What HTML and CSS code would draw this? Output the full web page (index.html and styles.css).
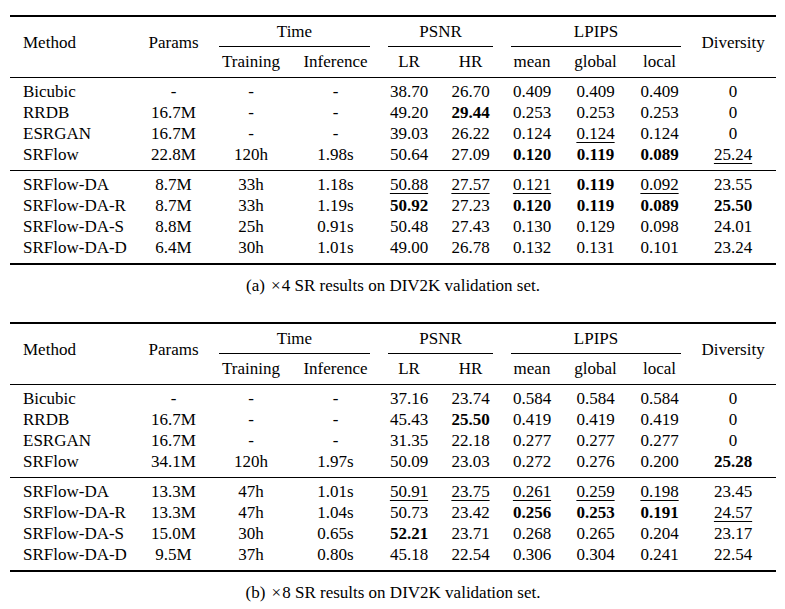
FILE: index.html
```html
<!DOCTYPE html>
<html>
<head>
<meta charset="utf-8">
<link rel="stylesheet" href="styles.css">
</head>
<body>
<div class="page">
  <table class="results">
    <colgroup>
      <col class="c-method"><col class="c-params"><col class="c-train"><col class="c-inf"><col class="c-lr"><col class="c-hr"><col class="c-mean"><col class="c-global"><col class="c-local"><col class="c-div">
    </colgroup>
    <thead>
      <tr class="h1">
        <th rowspan="2" class="span2 left">Method</th>
        <th rowspan="2" class="span2">Params</th>
        <th colspan="2" class="grp"><span>Time</span></th>
        <th colspan="2" class="grp"><span>PSNR</span></th>
        <th colspan="3" class="grp"><span>LPIPS</span></th>
        <th rowspan="2" class="span2">Diversity</th>
      </tr>
      <tr class="h2">
        <th>Training</th><th>Inference</th><th>LR</th><th>HR</th><th>mean</th><th>global</th><th>local</th>
      </tr>
    </thead>
    <tbody class="mid">
      <tr><td class="left">Bicubic</td><td>-</td><td>-</td><td>-</td><td>38.70</td><td>26.70</td><td>0.409</td><td>0.409</td><td>0.409</td><td>0</td></tr>
      <tr><td class="left">RRDB</td><td>16.7M</td><td>-</td><td>-</td><td>49.20</td><td><b>29.44</b></td><td>0.253</td><td>0.253</td><td>0.253</td><td>0</td></tr>
      <tr><td class="left">ESRGAN</td><td>16.7M</td><td>-</td><td>-</td><td>39.03</td><td>26.22</td><td>0.124</td><td><u>0.124</u></td><td>0.124</td><td>0</td></tr>
      <tr><td class="left">SRFlow</td><td>22.8M</td><td>120h</td><td>1.98s</td><td>50.64</td><td>27.09</td><td><b>0.120</b></td><td><b>0.119</b></td><td><b>0.089</b></td><td><u>25.24</u></td></tr>
    </tbody>
    <tbody class="end">
      <tr><td class="left">SRFlow-DA</td><td>8.7M</td><td>33h</td><td>1.18s</td><td><u>50.88</u></td><td><u>27.57</u></td><td><u>0.121</u></td><td><b>0.119</b></td><td><u>0.092</u></td><td>23.55</td></tr>
      <tr><td class="left">SRFlow-DA-R</td><td>8.7M</td><td>33h</td><td>1.19s</td><td><b>50.92</b></td><td>27.23</td><td><b>0.120</b></td><td><b>0.119</b></td><td><b>0.089</b></td><td><b>25.50</b></td></tr>
      <tr><td class="left">SRFlow-DA-S</td><td>8.8M</td><td>25h</td><td>0.91s</td><td>50.48</td><td>27.43</td><td>0.130</td><td>0.129</td><td>0.098</td><td>24.01</td></tr>
      <tr><td class="left">SRFlow-DA-D</td><td>6.4M</td><td>30h</td><td>1.01s</td><td>49.00</td><td>26.78</td><td>0.132</td><td>0.131</td><td>0.101</td><td>23.24</td></tr>
    </tbody>
  </table>
  <p class="caption">(a) <span class="times">&times;</span>4 SR results on DIV2K validation set.</p>

  <table class="results second">
    <colgroup>
      <col class="c-method"><col class="c-params"><col class="c-train"><col class="c-inf"><col class="c-lr"><col class="c-hr"><col class="c-mean"><col class="c-global"><col class="c-local"><col class="c-div">
    </colgroup>
    <thead>
      <tr class="h1">
        <th rowspan="2" class="span2 left">Method</th>
        <th rowspan="2" class="span2">Params</th>
        <th colspan="2" class="grp"><span>Time</span></th>
        <th colspan="2" class="grp"><span>PSNR</span></th>
        <th colspan="3" class="grp"><span>LPIPS</span></th>
        <th rowspan="2" class="span2">Diversity</th>
      </tr>
      <tr class="h2">
        <th>Training</th><th>Inference</th><th>LR</th><th>HR</th><th>mean</th><th>global</th><th>local</th>
      </tr>
    </thead>
    <tbody class="mid">
      <tr><td class="left">Bicubic</td><td>-</td><td>-</td><td>-</td><td>37.16</td><td>23.74</td><td>0.584</td><td>0.584</td><td>0.584</td><td>0</td></tr>
      <tr><td class="left">RRDB</td><td>16.7M</td><td>-</td><td>-</td><td>45.43</td><td><b>25.50</b></td><td>0.419</td><td>0.419</td><td>0.419</td><td>0</td></tr>
      <tr><td class="left">ESRGAN</td><td>16.7M</td><td>-</td><td>-</td><td>31.35</td><td>22.18</td><td>0.277</td><td>0.277</td><td>0.277</td><td>0</td></tr>
      <tr><td class="left">SRFlow</td><td>34.1M</td><td>120h</td><td>1.97s</td><td>50.09</td><td>23.03</td><td>0.272</td><td>0.276</td><td>0.200</td><td><b>25.28</b></td></tr>
    </tbody>
    <tbody class="end">
      <tr><td class="left">SRFlow-DA</td><td>13.3M</td><td>47h</td><td>1.01s</td><td><u>50.91</u></td><td><u>23.75</u></td><td><u>0.261</u></td><td><u>0.259</u></td><td><u>0.198</u></td><td>23.45</td></tr>
      <tr><td class="left">SRFlow-DA-R</td><td>13.3M</td><td>47h</td><td>1.04s</td><td>50.73</td><td>23.42</td><td><b>0.256</b></td><td><b>0.253</b></td><td><b>0.191</b></td><td><u>24.57</u></td></tr>
      <tr><td class="left">SRFlow-DA-S</td><td>15.0M</td><td>30h</td><td>0.65s</td><td><b>52.21</b></td><td>23.71</td><td>0.268</td><td>0.265</td><td>0.204</td><td>23.17</td></tr>
      <tr><td class="left">SRFlow-DA-D</td><td>9.5M</td><td>37h</td><td>0.80s</td><td>45.18</td><td>22.54</td><td>0.306</td><td>0.304</td><td>0.241</td><td>22.54</td></tr>
    </tbody>
  </table>
  <p class="caption">(b) <span class="times">&times;</span>8 SR results on DIV2K validation set.</p>
</div>
</body>
</html>
```

FILE: styles.css
```css
html, body {
  margin: 0;
  background: #ffffff;
}

body {
  font-family: "Liberation Serif", "Times New Roman", serif;
  font-size: 17px;
  color: #000000;
}

.page {
  padding: 15px 0 0 10px;
}

.results {
  width: 766px;
  border-collapse: collapse;
  table-layout: fixed;
  line-height: 21px;
}

.c-method { width: 127px; }
.c-params { width: 73px; }
.c-train { width: 82px; }
.c-inf { width: 87px; }
.c-lr { width: 60px; }
.c-hr { width: 63px; }
.c-mean { width: 60px; }
.c-global { width: 67px; }
.c-local { width: 61px; }
.c-div { width: 86px; }

.results thead {
  border-top: 2px solid #000000;
  border-bottom: 1px solid #000000;
}

.results tbody.mid {
  border-bottom: 1px solid #000000;
}

.results tbody.end {
  border-bottom: 2px solid #000000;
}

.results th,
.results td {
  font-weight: normal;
  text-align: center;
  padding: 0;
  white-space: nowrap;
}

.results .left {
  text-align: left;
  padding-left: 13px;
}

.results th.span2 {
  vertical-align: middle;
  padding-bottom: 10px;
}

.results .h1 th.grp {
  padding: 4px 9px 0;
}

.results .h1 th.grp span {
  display: block;
  border-bottom: 1px solid #000000;
  padding-bottom: 4px;
}

.results .h2 th {
  padding-top: 4px;
  padding-bottom: 5px;
}

.results tbody tr:first-child td {
  padding-top: 3px;
}

.results tbody tr:last-child td {
  padding-bottom: 5px;
}

.results b {
  font-weight: bold;
}

.results u {
  text-decoration: underline;
  text-decoration-thickness: 1px;
  text-underline-offset: 3px;
}

.caption {
  width: 766px;
  margin: 10px 0 0;
  text-align: center;
  line-height: 21px;
}

.caption .times {
  padding: 0 1px 0 2px;
}

.results.second {
  margin-top: 26px;
}
```
